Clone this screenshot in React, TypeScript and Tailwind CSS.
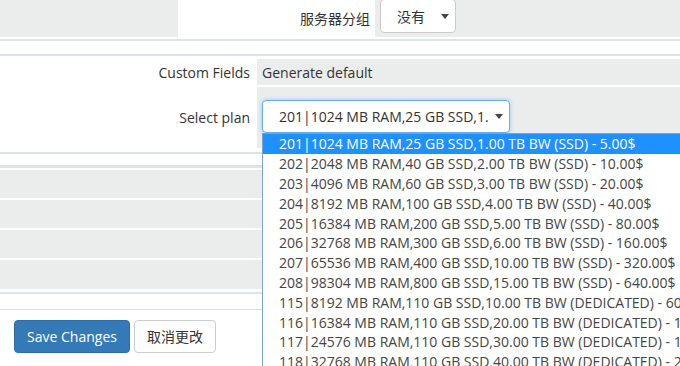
import React from "react";

const plans = [
  "201|1024 MB RAM,25 GB SSD,1.00 TB BW (SSD) - 5.00$",
  "202|2048 MB RAM,40 GB SSD,2.00 TB BW (SSD) - 10.00$",
  "203|4096 MB RAM,60 GB SSD,3.00 TB BW (SSD) - 20.00$",
  "204|8192 MB RAM,100 GB SSD,4.00 TB BW (SSD) - 40.00$",
  "205|16384 MB RAM,200 GB SSD,5.00 TB BW (SSD) - 80.00$",
  "206|32768 MB RAM,300 GB SSD,6.00 TB BW (SSD) - 160.00$",
  "207|65536 MB RAM,400 GB SSD,10.00 TB BW (SSD) - 320.00$",
  "208|98304 MB RAM,800 GB SSD,15.00 TB BW (SSD) - 640.00$",
  "115|8192 MB RAM,110 GB SSD,10.00 TB BW (DEDICATED) - 60.00$",
  "116|16384 MB RAM,110 GB SSD,20.00 TB BW (DEDICATED) - 120.00$",
  "117|24576 MB RAM,110 GB SSD,30.00 TB BW (DEDICATED) - 180.00$",
  "118|32768 MB RAM,110 GB SSD,40.00 TB BW (DEDICATED) - 240.00$",
];

function Arrow() {
  return (
    <svg width="8" height="5" viewBox="0 0 8 5" className="shrink-0">
      <path d="M0 0 L8 0 L4 5 Z" fill="#444" />
    </svg>
  );
}

export default function App() {
  return (
    <div
      className="relative w-[680px] h-[366px] overflow-hidden bg-white text-[14px] text-[#333]"
      style={{ fontFamily: '"Open Sans", "Noto Sans CJK SC", sans-serif' }}
    >
      {/* Row 1 */}
      <div className="flex h-[37px]">
        <div className="w-[178px] bg-[#ebeded]" />
        <div className="w-[197px] flex items-center justify-end pr-[5px]" style={{ fontFamily: '"Noto Sans CJK SC", sans-serif' }}>
          服务器分组
        </div>
        <div className="flex-1 bg-[#ebeded] pl-[5px]">
          <div
            className="mt-[-1px] w-[76px] h-[34px] bg-white border border-[#ccc] rounded-[4px] flex items-center pl-[16px] pr-[6px] justify-between"
            style={{ fontFamily: '"Noto Sans CJK SC", sans-serif' }}
          >
            <span>没有</span>
            <Arrow />
          </div>
        </div>
      </div>
      <div className="h-[2px]" />
      <div className="h-[2px] bg-[#dbe4ec]" />
      <div className="h-[13px]" />
      <div className="h-[2px] bg-[#dbe4ec]" />
      <div className="h-[3px]" />
      {/* Custom Fields */}
      <div className="flex h-[26px]">
        <div className="w-[257px] flex items-center justify-end pr-[7px]">Custom Fields</div>
        <div className="flex-1 bg-[#ebeded] flex items-center pl-[5px]">Generate default</div>
      </div>
      <div className="h-[2px]" />
      {/* Select plan */}
      <div className="flex h-[61px]">
        <div className="w-[257px] flex justify-end pr-[7px] pt-[20px]">Select plan</div>
        <div className="flex-1 bg-[#ebeded] pl-[5px] pt-[13px]">
          <div className="w-[248px] h-[33px] bg-white border border-[#66afe9] rounded-[4px] shadow-[0_0_4px_rgba(102,175,233,0.6)] flex items-center pl-[16px] pr-[6px]">
            <span className="w-[209px] shrink-0 overflow-hidden whitespace-nowrap">201|1024 MB RAM,25 GB SSD,1.00 TB BW</span>
            <span className="flex-1" />
            <Arrow />
          </div>
        </div>
      </div>
      <div className="h-[4px]" />
      <div className="h-[2px] bg-[#dbe4ec]" />
      <div className="h-[11px]" />
      <div className="h-[3px] bg-[#dbe4ec]" />
      <div className="h-[2px]" />
      <div className="flex flex-col gap-[2px]">
        <div className="h-[28px] bg-[#ebeded]" />
        <div className="h-[28px] bg-[#ebeded]" />
        <div className="h-[28px] bg-[#ebeded]" />
        <div className="h-[29px] bg-[#ebeded]" />
      </div>
      <div className="h-[3px]" />
      <div className="h-[2px] bg-[#dbe4ec]" />
      <div className="h-[15px]" />
      <div className="h-[1px] bg-[#dddddd]" />
      <div className="flex gap-[4px] pl-[14px] pt-[10px]">
        <button className="w-[116px] h-[33px] bg-[#337ab7] border border-[#2e6da4] rounded-[4px] text-white text-[14px]">
          Save Changes
        </button>
        <button
          className="w-[82px] h-[33px] bg-white border border-[#ccc] rounded-[4px] text-[#333] text-[14px]"
          style={{ fontFamily: '"Noto Sans CJK SC", sans-serif' }}
        >
          取消更改
        </button>
      </div>

      {/* Dropdown list */}
      <div className="absolute left-[262px] top-[133px] w-[418px] overflow-hidden bg-white border-l border-t border-[#7aa0d4]">
        {plans.map((p, i) => (
          <div
            key={p}
            className={
              "h-[19.8px] flex items-center pl-[16px] whitespace-nowrap " +
              (i === 0 ? "bg-[#1e90ff] text-white" : "text-[#444]")
            }
          >
            {p}
          </div>
        ))}
      </div>
    </div>
  );
}
